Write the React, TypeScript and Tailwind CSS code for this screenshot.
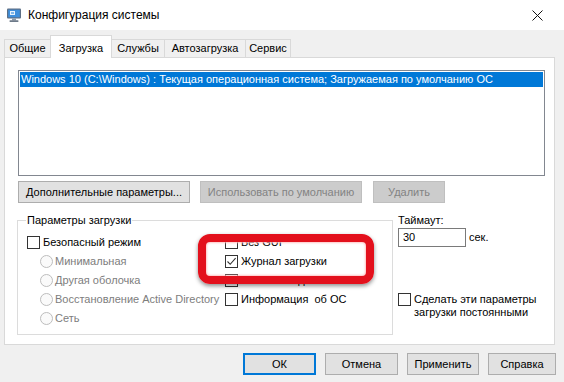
import React from "react";

function Checkbox({ checked = false }: { checked?: boolean }) {
  return (
    <span className="w-[13px] h-[13px] border border-[#333333] bg-white flex items-center justify-center shrink-0">
      {checked && (
        <svg width="11" height="11" viewBox="0 0 11 11">
          <path d="M1.5 5.5 L4.2 8.3 L9.6 2.2" fill="none" stroke="#333" strokeWidth="1.1" />
        </svg>
      )}
    </span>
  );
}

function Radio() {
  return <span className="w-[13px] h-[13px] rounded-full border border-[#bdbdbd] bg-[#fafafa] shrink-0" />;
}

function WinButton({ label, width, disabled = false, focused = false }: { label: string; width: string; disabled?: boolean; focused?: boolean }) {
  return (
    <div
      className={`${width} h-[22px] flex items-center justify-center border whitespace-nowrap ${
        disabled
          ? "bg-[#cccccc] border-[#bfbfbf] text-[#838383]"
          : focused
          ? "bg-[#e1e1e1] border-[#0078d7] shadow-[inset_0_0_0_1px_#0078d7] text-black"
          : "bg-[#e1e1e1] border-[#adadad] text-black"
      }`}
    >
      {label}
    </div>
  );
}

export default function App() {
  const tabs = [
    { name: "Общие", w: "w-[47px]" },
    { name: "Загрузка", w: "w-[62px]" },
    { name: "Службы", w: "w-[54px]" },
    { name: "Автозагрузка", w: "w-[82px]" },
    { name: "Сервис", w: "w-[46px]" },
  ];

  return (
    <div className="w-[564px] h-[382px] bg-[#f0f0f0] flex flex-col text-[11px] text-black overflow-hidden whitespace-nowrap font-['Liberation_Sans',Arial,sans-serif]">
      {/* Title bar */}
      <div className="h-[30px] bg-white flex items-center pl-[6px] pr-[21px] shrink-0">
        <svg width="16" height="16" viewBox="0 0 16 16">
          <rect x="1" y="1.5" width="14" height="10" rx="1" fill="#5c6f86" />
          <rect x="2.2" y="2.7" width="11.6" height="7.6" fill="#3f8fdc" />
          <rect x="4" y="4" width="5" height="4" fill="#e8f2fc" />
          <rect x="5" y="5" width="3" height="2" fill="#7fb6ea" />
          <rect x="6" y="11.5" width="4" height="2" fill="#8c98a6" />
          <rect x="3.5" y="13.3" width="9" height="1.6" rx="0.6" fill="#6d7a89" />
        </svg>
        <span className="ml-[6px] text-[12px]">Конфигурация системы</span>
        <svg className="ml-auto" width="11" height="11" viewBox="0 0 11 11">
          <path d="M0.5 0.5 L10.5 10.5 M10.5 0.5 L0.5 10.5" stroke="#111" strokeWidth="1" />
        </svg>
      </div>

      {/* Tabs */}
      <div className="h-[27px] flex items-end pl-[4px] shrink-0">
        {tabs.map((t, i) =>
          i === 1 ? (
            <div
              key={t.name}
              className={`${t.w} h-[23px] -mb-px -ml-px relative z-10 bg-white border border-b-0 border-[#d9d9d9] flex items-start justify-center pt-[4px]`}
            >
              {t.name}
            </div>
          ) : (
            <div
              key={t.name}
              className={`${t.w} h-[18px] ${i > 0 ? "-ml-px" : ""} bg-[#f0f0f0] border border-b-0 border-[#d9d9d9] flex items-center justify-center`}
            >
              {t.name}
            </div>
          )
        )}
      </div>

      {/* Panel */}
      <div className="ml-[4px] w-[551px] h-[288px] bg-white border border-[#d9d9d9] pl-[13px] pt-[12px] flex flex-col shrink-0">
        {/* Listbox */}
        <div className="w-[527px] h-[106px] border border-[#828790] p-px">
          <div className="h-[15px] bg-[#0078d7] text-white leading-[15px] pl-[1px]">
            Windows 10 (C:\Windows) : Текущая операционная система; Загружаемая по умолчанию ОС
          </div>
        </div>

        {/* Buttons */}
        <div className="flex mt-[5px]">
          <WinButton label="Дополнительные параметры..." width="w-[172px]" />
          <div className="ml-[10px]">
            <WinButton label="Использовать по умолчанию" width="w-[162px]" disabled />
          </div>
          <div className="ml-[11px]">
            <WinButton label="Удалить" width="w-[72px]" disabled />
          </div>
        </div>

        {/* Options row */}
        <div className="flex items-start mt-[10px]">
          {/* Group box */}
          <div className="mt-[7px] -ml-px w-[376px] h-[115px] border border-[#dcdcdc] relative pt-[12px] pl-[9px]">
            <span className="absolute -top-[8px] left-[8px] px-[1px] bg-white leading-[14px]">Параметры загрузки</span>
            <div className="flex">
              <div className="w-[198px] flex flex-col">
                <div className="h-[19px] flex items-center gap-[3px]">
                  <Checkbox />
                  <span>Безопасный режим</span>
                </div>
                {["Минимальная", "Другая оболочка", "Восстановление Active Directory", "Сеть"].map((r) => (
                  <div key={r} className="h-[19px] flex items-center gap-[2px] pl-[13px] text-[#7d7d7d]">
                    <Radio />
                    <span>{r}</span>
                  </div>
                ))}
              </div>
              <div className="flex flex-col">
                {[
                  { l: "Без GUI", c: false },
                  { l: "Журнал загрузки", c: true },
                  { l: "Базовое видео", c: false },
                  { l: "Информация  об ОС", c: false },
                ].map((r) => (
                  <div key={r.l} className="h-[19px] flex items-center gap-[3px] whitespace-pre">
                    <Checkbox checked={r.c} />
                    <span>{r.l}</span>
                  </div>
                ))}
              </div>
            </div>
            {/* red annotation */}
            <div className="absolute left-[180px] top-[13px] w-[176px] h-[50px] rounded-[12px] border-[8px] border-[#e3101c] shadow-[0_2px_4px_rgba(0,0,0,0.45),inset_0_0_2px_1px_rgba(255,190,190,0.9)]" />
          </div>

          {/* Right column */}
          <div className="ml-[5px] flex flex-col">
            <span className="leading-[14px]">Таймаут:</span>
            <div className="flex items-center mt-[1px]">
              <div className="w-[68px] h-[19px] border border-[#7a7a7a] bg-white flex items-center pl-[4px]">30</div>
              <span className="ml-[3px]">сек.</span>
            </div>
            <div className="flex items-start gap-[3px] mt-[46px]">
              <Checkbox />
              <span className="leading-[13px]">
                Сделать эти параметры
                <br />
                загрузки постоянными
              </span>
            </div>
          </div>
        </div>
      </div>

      {/* Bottom buttons */}
      <div className="flex mt-[8px] pl-[243px] gap-[9px]">
        <WinButton label="ОК" width="w-[73px]" focused />
        <WinButton label="Отмена" width="w-[73px]" />
        <WinButton label="Применить" width="w-[72px]" />
        <WinButton label="Справка" width="w-[68px]" />
      </div>
    </div>
  );
}
